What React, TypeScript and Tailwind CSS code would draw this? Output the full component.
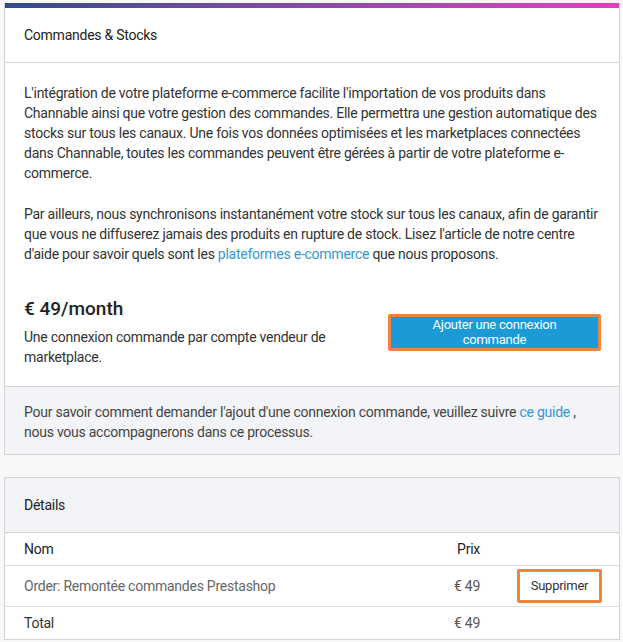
import React from "react";

const font = { fontFamily: "Roboto, 'Liberation Sans', sans-serif" };

export default function App() {
  return (
    <div className="min-h-[642px] bg-[#f8f8f8] pt-[3px] pl-[4px] pr-[3px] pb-[2px] tracking-[-0.25px]" style={font}>
      {/* Commandes & Stocks */}
      <section className="border border-[#d3d3d3] border-t-0 bg-white">
        <div className="h-[5px] bg-gradient-to-r from-[#2f4a8a] via-[#8a4aa6] to-[#e03ec0]" />
        <div className="flex h-[55px] items-center border-b border-[#d8d8d8] px-[19px] pt-[1px] text-[14px] text-[#222]">
          Commandes &amp; Stocks
        </div>
        <div className="pl-[19px] pr-[14px] pt-[20px] pb-[19px] text-[14px] leading-[20px] text-[#333]">
          <p className="whitespace-nowrap">
            L'intégration de votre plateforme e-commerce facilite l'importation de vos produits dans
            <br />
            Channable ainsi que votre gestion des commandes. Elle permettra une gestion automatique des
            <br />
            stocks sur tous les canaux. Une fois vos données optimisées et les marketplaces connectées
            <br />
            dans Channable, toutes les commandes peuvent être gérées à partir de votre plateforme e-
            <br />
            commerce.
          </p>
          <p className="mt-[21px] whitespace-nowrap">
            Par ailleurs, nous synchronisons instantanément votre stock sur tous les canaux, afin de garantir
            <br />
            que vous ne diffuserez jamais des produits en rupture de stock. Lisez l'article de notre centre
            <br />
            d'aide pour savoir quels sont les <a className="text-[#3896d3]">plateformes e-commerce</a> que nous
            proposons.
          </p>
          <div className="mt-[33px] flex items-center justify-between">
            <div className="w-[330px]">
              <div className="text-[19px] leading-[24px] font-medium tracking-normal text-[#222]">€ 49/month</div>
              <p className="mt-[6px]">Une connexion commande par compte vendeur de marketplace.</p>
            </div>
            <button className="mr-[4px] flex h-[37px] w-[213px] flex-col items-center justify-center rounded-[2px] border-[3px] border-[#ef843e] bg-[#1b9ad7] text-[13px] leading-[15px] text-white">
              <span>Ajouter une connexion</span>
              <span>commande</span>
            </button>
          </div>
        </div>
        <div className="border-t border-[#d3d3d3] bg-[#f3f4f7] px-[19px] pt-[15px] pb-[12px] text-[14px] leading-[20px] text-[#444]">
          Pour savoir comment demander l'ajout d'une connexion commande, veuillez suivre{" "}
          <a className="text-[#3896d3]">ce guide</a> , nous vous accompagnerons dans ce processus.
        </div>
      </section>

      {/* Détails */}
      <section className="mt-[22px] border border-[#d3d3d3] bg-white text-[14px]">
        <div className="flex h-[55px] items-center border-b border-[#d3d3d3] bg-[#f3f4f7] px-[19px] text-[#222]">
          Détails
        </div>
        <div className="flex h-[33px] items-center border-b border-[#e0e0e0] text-[#222]">
          <div className="flex-1 pl-[19px]">Nom</div>
          <div className="w-[80px] text-right">Prix</div>
          <div className="w-[139px]" />
        </div>
        <div className="flex h-[41px] items-center border-b border-[#e0e0e0] text-[#666]">
          <div className="flex-1 pl-[19px]">Order: Remontée commandes Prestashop</div>
          <div className="w-[80px] text-right text-[#555]">€ 49</div>
          <div className="flex w-[139px] justify-end pr-[17px]">
            <button className="flex h-[34px] w-[85px] items-center justify-center rounded-[2px] border-[3px] border-[#ef843e] bg-white text-[13px] text-[#333]">
              Supprimer
            </button>
          </div>
        </div>
        <div className="flex h-[32px] items-center text-[#333]">
          <div className="flex-1 pl-[19px]">Total</div>
          <div className="w-[80px] text-right text-[#555]">€ 49</div>
          <div className="w-[139px]" />
        </div>
      </section>
    </div>
  );
}
